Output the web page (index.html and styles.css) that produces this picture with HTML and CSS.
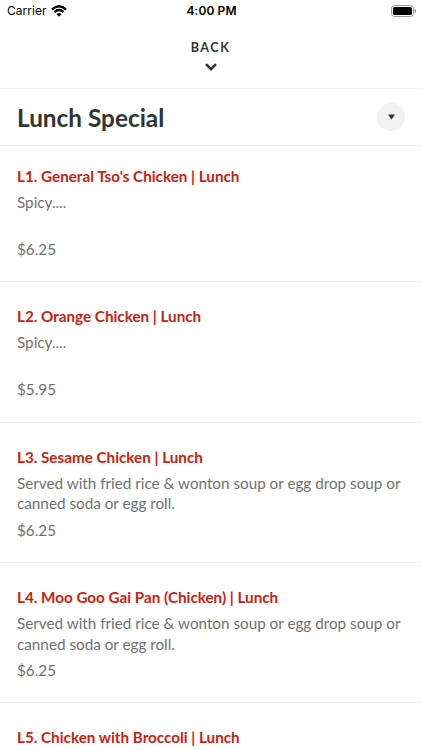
FILE: index.html
```html
<!DOCTYPE html>
<html lang="en">
<head>
<meta charset="utf-8">
<title>Lunch Special</title>
<link rel="stylesheet" href="styles.css">
</head>
<body>
<div class="status">
  <div class="carrier"><span>Carrier</span>
    <svg class="wifi" width="16" height="12" viewBox="0 0 16 12" fill="none" stroke="#000" stroke-width="2.4"><path d="M1 4.500Q8-1.900 15 4.500M3.400 7.200Q8 3 12.600 7.200"/><path d="M5.400 9.100Q8 7 10.600 9.100L8 11.700Z" fill="#000" stroke="none"/></svg>
  </div>
  <div class="time">4:00 PM</div>
  <svg class="battery" width="25" height="12" viewBox="0 0 25 12"><rect x=".5" y=".5" width="22" height="11" rx="3" fill="none" stroke="#999"/><rect x="2" y="2" width="19" height="8" rx="1.600"/><path d="M23.700 4v4q1.300-.6 1.300-2t-1.300-2" fill="#777"/></svg>
</div>
<div class="back"><span>BACK</span>
  <svg width="12" height="8" viewBox="0 0 12 8" fill="none" stroke="#333" stroke-width="2.500"><path d="M1 1.200l5 5 5-5"/></svg>
</div>
<header class="heading"><h1>Lunch Special</h1>
  <div class="toggle"><svg width="7" height="6" viewBox="0 0 7 6"><path d="M0 .5h7L3.500 5.500z" fill="#333"/></svg></div>
</header>
<main>
  <article class="item"><h2>L1. General Tso's Chicken | Lunch</h2><p class="desc">Spicy....</p><p class="price">$6.25</p></article>
  <article class="item"><h2>L2. Orange Chicken | Lunch</h2><p class="desc">Spicy....</p><p class="price">$5.95</p></article>
  <article class="item"><h2>L3. Sesame Chicken | Lunch</h2><p class="desc">Served with fried rice &amp; wonton soup or egg drop soup or<br>canned soda or egg roll.</p><p class="price">$6.25</p></article>
  <article class="item"><h2>L4. Moo Goo Gai Pan (Chicken) | Lunch</h2><p class="desc">Served with fried rice &amp; wonton soup or egg drop soup or<br>canned soda or egg roll.</p><p class="price">$6.25</p></article>
  <article class="item last"><h2>L5. Chicken with Broccoli | Lunch</h2></article>
</main>
</body>
</html>
```

FILE: styles.css
```css
* { box-sizing: border-box; margin: 0; padding: 0; }
body { width: 422px; height: 750px; overflow: hidden; background: #fff; font-family: Lato, sans-serif; color: #333; }
svg { display: block; }
.status { display: grid; grid-template-columns: 1fr auto 1fr; align-items: center; height: 21px; padding: 0 6px 0 7px; font-family: Inter, sans-serif; font-size: 12px; color: #000; }
.carrier { display: flex; align-items: center; gap: 4px; }
.carrier span { letter-spacing: .05px; }
.time { font-weight: 600; letter-spacing: .1px; }
.battery { justify-self: end; }
.back { display: flex; flex-direction: column; align-items: center; height: 68px; padding: 19px 1px 0 0; border-bottom: 1px solid #efefef; font-size: 12.6px; line-height: 16px; font-weight: 700; letter-spacing: 1.5px; }
.back svg { margin-top: 7px; }
.heading { display: flex; align-items: center; justify-content: space-between; height: 57px; padding: 0 17px; border-bottom: 1px solid #efefef; }
h1 { padding-top: 2px; font-size: 24.35px; line-height: 30px; font-weight: 700; }
.toggle { display: grid; place-items: center; width: 28px; height: 28px; border-radius: 50%; background: #f2f2f2; }
.item { height: 140.4px; padding: 24px 17px 0; border-bottom: 1px solid #efefef; }
.item:first-child { height: 136.3px; padding-top: 20px; }
.item.last { height: auto; border-bottom: 0; }
h2 { font-size: 15.23px; line-height: 20px; font-weight: 700; color: #cb210f; white-space: nowrap; }
.desc { height: 41px; margin-top: 6.2px; font-size: 15.25px; line-height: 20.5px; color: #707070; white-space: nowrap; }
.price { margin-top: 6px; font-size: 15.25px; line-height: 20px; color: #707070; }
```
